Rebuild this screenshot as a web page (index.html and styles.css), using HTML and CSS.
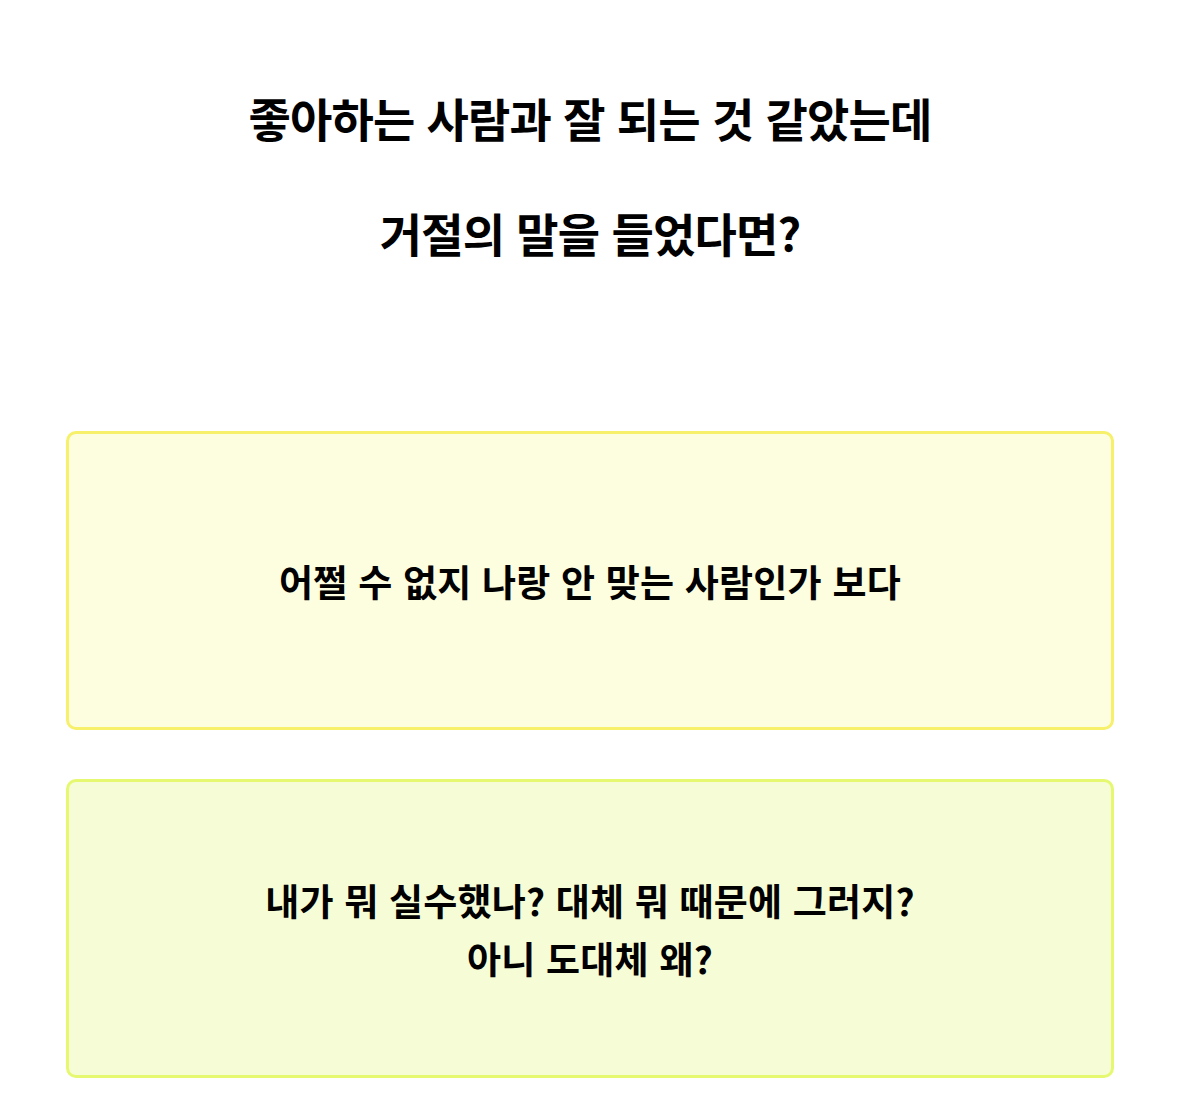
FILE: index.html
```html
<!DOCTYPE html>
<html lang="ko">
<head>
<meta charset="utf-8">
<title>질문</title>
<link rel="stylesheet" href="styles.css">
</head>
<body>
<main class="quiz">
  <h1 class="question">좋아하는 사람과 잘 되는 것 같았는데<br>거절의 말을 들었다면?</h1>
  <div class="answers">
    <button class="answer answer-a">어쩔 수 없지 나랑 안 맞는 사람인가 보다</button>
    <button class="answer answer-b">내가 뭐 실수했나? 대체 뭐 때문에 그러지?<br>아니 도대체 왜?</button>
  </div>
</main>
</body>
</html>
```

FILE: styles.css
```css
html, body {
  margin: 0;
  padding: 0;
  background: #ffffff;
}

body {
  font-family: "Noto Sans CJK KR", "Noto Sans", sans-serif;
  color: #000000;
}

.quiz {
  display: flex;
  flex-direction: column;
  padding: 60px 65px 0 66px;
}

.question {
  margin: 0;
  text-align: center;
  font-size: 46px;
  font-weight: 700;
  line-height: 115px;
  letter-spacing: -0.8px;
}

.answers {
  display: flex;
  flex-direction: column;
  gap: 49px;
  margin-top: 141px;
}

.answer {
  box-sizing: border-box;
  height: 299px;
  border-radius: 10px;
  border: 3px solid;
  font-family: inherit;
  font-size: 37px;
  font-weight: 700;
  line-height: 58px;
  letter-spacing: 0.2px;
  color: #000000;
  text-align: center;
  padding: 0;
}

.answer-a {
  background: #fdfddf;
  border-color: #f6f06a;
}

.answer-b {
  background: #f6fdd6;
  border-color: #e6f870;
}
```
